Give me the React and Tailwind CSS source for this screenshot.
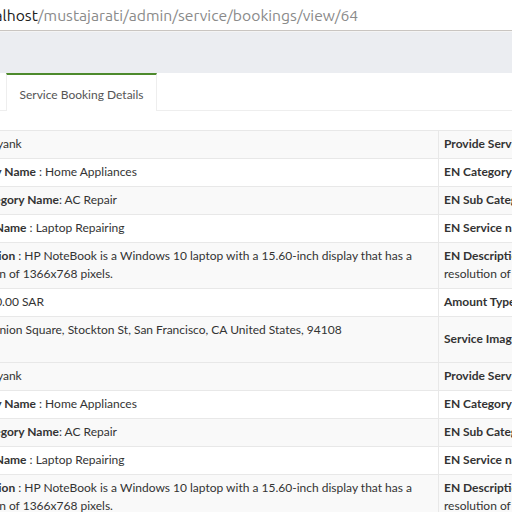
import React from 'react';

const desc = 'HP NoteBook is a Windows 10 laptop with a 15.60-inch display that has a resolution of 1366x768 pixels.';

const rows = [
  { label: 'Ref', value: 'Mayank', rLabel: 'Provide Service Name' },
  { label: 'Category Name', value: 'Home Appliances', rLabel: 'EN Category Name' },
  { label: 'Sub Category Name', tight: true, value: 'AC Repair', rLabel: 'EN Sub Category Name' },
  { label: 'Service Name', value: 'Laptop Repairing', rLabel: 'EN Service name' },
  { label: 'Description', value: desc, rLabel: 'EN Description', rValue: desc },
  { label: 'Fee', value: '100.00 SAR', rLabel: 'Amount Type' },
  { label: 'Place', value: 'Union Square, Stockton St, San Francisco, CA United States, 94108', rLabel: 'Service Image', image: true },
];

const Row = ({ r, striped }) => (
  <div className={`flex border-t border-[#e8e8e8] ${striped ? 'bg-[#f9f9f9]' : 'bg-white'}`}>
    <div className="w-[493px] shrink-0 px-[8px] pt-[4px] pb-[5px] leading-[18px]">
      <span className="font-bold">{r.label}</span>
      {r.tight ? ': ' : ' : '}
      {r.value}
    </div>
    <div className="w-[540px] shrink-0 border-l border-[#e8e8e8] px-[5px] pt-[4px] pb-[5px] leading-[18px]">
      {r.image ? (
        <div className="h-[36px] flex items-center font-bold">{r.rLabel}</div>
      ) : (
        <div>
          <span className="font-bold">{r.rLabel}</span> : {r.rValue || ''}
        </div>
      )}
    </div>
  </div>
);

export default function App() {
  return (
    <div className="w-[512px] h-[512px] overflow-hidden bg-white text-[#333]">
      <div className="h-[31px] border-b border-[#c9c5c1] bg-white flex items-center whitespace-nowrap" style={{ fontFamily: 'Ubuntu, "Noto Sans", sans-serif' }}>
        <div className="-ml-[26px] text-[15.7px] pt-[1px]">
          <span className="text-[#202020]">localhost</span>
          <span className="text-[#8a8a8a]">/mustajarati/admin/service/bookings/view/64</span>
        </div>
      </div>
      <div className="h-[1px] bg-[#f4f4f4]" />
      <div className="h-[41px] bg-[#ebedf1]" />
      <div style={{ fontFamily: 'Lato, "Liberation Sans", sans-serif' }}>
        <div className="flex border-b border-[#eeeeee] h-[38px]">
          <div className="w-[6px]" />
          <div className="w-[151px] border-t-2 border-t-[#4d8a2c] border-x border-x-[#eeeeee] bg-white -mb-[1px] pt-[4px] flex items-center justify-center text-[12px] text-[#555]">
            Service Booking Details
          </div>
        </div>
        <div className="h-[19px]" />
        <div className="-ml-[55px] text-[12px] flex flex-col w-[1100px]">
          {rows.map((r, i) => (
            <Row key={'a' + i} r={r} striped={i % 2 === 0} />
          ))}
          {rows.slice(0, 5).map((r, i) => (
            <Row key={'b' + i} r={r} striped={i % 2 === 0} />
          ))}
        </div>
      </div>
    </div>
  );
}
